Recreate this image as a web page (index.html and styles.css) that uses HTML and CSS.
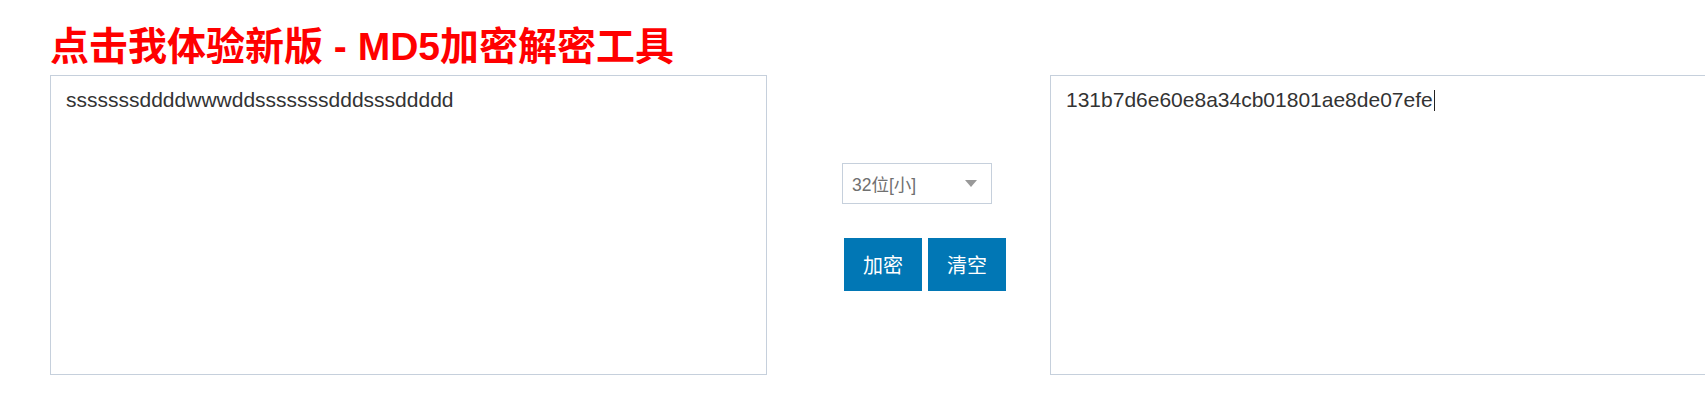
FILE: index.html
```html
<!DOCTYPE html>
<html lang="zh-CN">
<head>
<meta charset="utf-8">
<title>MD5加密解密工具</title>
<link rel="stylesheet" href="styles.css">
</head>
<body>
<div class="page">
  <h1 class="title">点击我体验新版 - MD5加密解密工具</h1>
  <div class="tool">
    <div class="box">sssssssddddwwwddsssssssdddsssddddd</div>
    <div class="middle">
      <div class="select">
        <span class="select-text">32位[小]</span>
        <span class="arrow"></span>
      </div>
      <div class="buttons">
        <button class="btn">加密</button>
        <button class="btn">清空</button>
      </div>
    </div>
    <div class="box">131b7d6e60e8a34cb01801ae8de07efe<span class="caret"></span></div>
  </div>
</div>
</body>
</html>
```

FILE: styles.css
```css
html, body {
  margin: 0;
  padding: 0;
  background: #fff;
  overflow: hidden;
}
.page {
  padding-left: 50px;
  width: 1800px;
}
.title {
  margin: 0;
  padding-top: 27px;
  height: 75px;
  box-sizing: border-box;
  font-family: "Liberation Sans", "Noto Sans CJK SC", sans-serif;
  font-weight: bold;
  font-size: 39px;
  line-height: 39px;
  color: #ff0000;
  white-space: nowrap;
}
.tool {
  display: flex;
  align-items: flex-start;
}
.box {
  width: 717px;
  height: 300px;
  box-sizing: border-box;
  border: 1px solid #c6d0dc;
  padding: 12px 15px;
  font-family: "Liberation Sans", "Noto Sans CJK SC", sans-serif;
  font-size: 21px;
  line-height: 24px;
  color: #333;
  flex: none;
}
.caret {
  display: inline-block;
  width: 1px;
  height: 21px;
  background: #222;
  vertical-align: -4px;
  margin-left: 1px;
}
.middle {
  width: 283px;
  flex: none;
  padding-top: 88px;
  padding-left: 75px;
  box-sizing: border-box;
}
.select {
  width: 150px;
  height: 41px;
  box-sizing: border-box;
  border: 1px solid #c6d0dc;
  display: flex;
  align-items: center;
  justify-content: space-between;
  padding: 0 14px 0 9px;
  font-family: "Liberation Sans", "Noto Sans CJK SC", sans-serif;
  font-size: 17.5px;
  color: #707070;
}
.arrow {
  width: 0;
  height: 0;
  border-left: 6px solid transparent;
  border-right: 6px solid transparent;
  border-top: 7px solid #999;
}
.buttons {
  display: flex;
  gap: 6px;
  margin-top: 34px;
  margin-left: 2px;
}
.btn {
  width: 78px;
  height: 53px;
  border: none;
  padding: 0;
  background: #0177b5;
  color: #fff;
  font-family: "Noto Sans CJK SC", sans-serif;
  font-size: 20px;
}
```
